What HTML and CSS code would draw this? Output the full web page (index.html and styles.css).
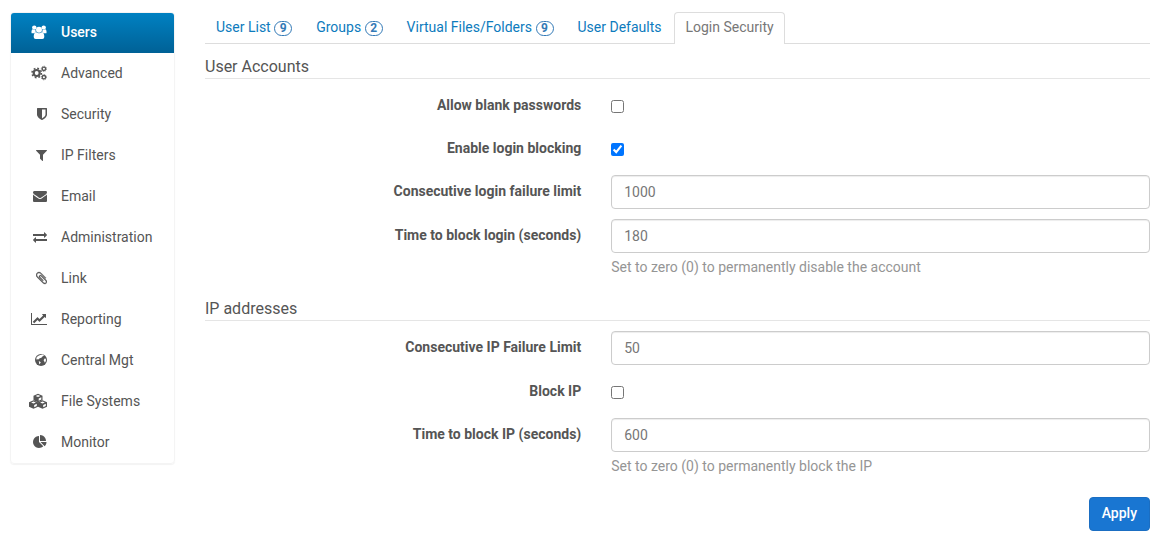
FILE: index.html
```
<!DOCTYPE html>
<html lang="en">
<head>
    <meta charset="UTF-8">
    <meta name="viewport" content="width=device-width, initial-scale=1.0">
    <title>Login Security</title>
    <link rel="stylesheet" href="styles.css">
</head>
<body>
    <nav class="sidebar">
        <a href="#" class="active">
            <span class="icon"><svg width="16" height="16" viewBox="0 0 16 16"><circle cx="3.3" cy="3.6" r="2.200"/><circle cx="12.7" cy="3.6" r="2.200"/><path d="M.5 9V7.2Q.7 5.3 1.8 5.3q1.5 1 2.7.4Q4.300 7.500 5 8.400 3.700 8.500 3 9.300H1.200Q.5 9.300.5 9zM15.500 9V7.200q-.2-1.900-1.300-1.900-1.500 1-2.700.4.2 1.800-.5 2.700 1.300.1 2 .9h1.800q.7 0 .7-.3z"/><circle cx="8" cy="5.700" r="3"/><path d="M2.700 13q0-4.500 2.500-4.700Q8 10.300 10.800 8.300q2.500.2 2.500 4.700 0 2-2 2H4.700q-2 0-2-2z"/></svg></span>
            Users
        </a>
        <a href="#">
            <span class="icon"><svg width="16" height="16" viewBox="0 0 16 16"><g fill="none" stroke="currentColor"><circle cx="5.700" cy="8" r="3" stroke-width="2.200"/><circle cx="5.700" cy="8" r="4.700" stroke-width="1.500" stroke-dasharray="1.800 1.890"/><circle cx="12.900" cy="3.800" r="1.700" stroke-width="1.300"/><circle cx="12.900" cy="3.800" r="2.600" stroke-width=".8" stroke-dasharray="1.100 .94"/><circle cx="12.900" cy="12.200" r="1.700" stroke-width="1.300"/><circle cx="12.900" cy="12.200" r="2.600" stroke-width=".8" stroke-dasharray="1.100 .94"/></g></svg></span>
            Advanced
        </a>
        <a href="#">
            <span class="icon"><svg width="10" height="14" viewBox="256 0 1280 1792"><path d="M1344 960v-640h-448v1137q119-63 213-137 235-184 235-360zm192-768v768q0 86-33.500 170.500t-83 150-118 127.500-126.500 103-121 77.500-89.500 49.500-42.500 20q-12 6-26 6t-26-6q-16-7-42.500-20t-89.500-49.500-121-77.500-126.500-103-118-127.500-83-150-33.500-170.500v-768q0-26 19-45t45-19h1152q26 0 45 19t19 45z"/></svg></span>
            Security
        </a>
        <a href="#">
            <span class="icon"><svg width="11" height="14" viewBox="192 0 1408 1792"><path d="M1595 295q17 41-14 70l-493 493v742q0 42-39 59-13 5-25 5-27 0-45-19l-256-256q-19-19-19-45v-486l-493-493q-31-29-14-70 17-39 59-39h1280q42 0 59 39z"/></svg></span>
            IP Filters
        </a>
        <a href="#">
            <span class="icon"><svg width="14" height="14" viewBox="0 0 1792 1792"><path d="M1792 710v794q0 66-47 113t-113 47h-1472q-66 0-113-47t-47-113v-794q44 49 101 87 362 246 497 345 57 42 92.500 65.500t94.500 48 110 24.500h2q51 0 110-24.500t94.500-48 92.500-65.500q170-123 498-345 57-39 100-87zm0-294q0 79-49 151t-122 123q-376 261-468 325-10 7-42.500 31t-54 38.500-52 32.500-57.500 27-50 9h-2q-23 0-50-9t-57.500-27-52-32.500-54-38.500-42.500-31q-91-64-262-182.500t-205-142.500q-62-42-117-115.500t-55-136.500q0-78 41.500-130t118.500-52h1472q65 0 112.500 47t47.500 113z"/></svg></span>
            Email
        </a>
        <a href="#">
            <span class="icon"><svg width="14" height="14" viewBox="0 0 1792 1792"><path d="M1792 1184v192q0 13-9.500 22.500t-22.500 9.500h-1376v192q0 13-9.500 22.500t-22.500 9.500q-12 0-24-10l-319-320q-9-9-9-22 0-14 9-23l320-320q9-9 23-9 13 0 22.500 9.500t9.500 22.500v192h1376q13 0 22.500 9.500t9.500 22.500zm0-544q0 14-9 23l-320 320q-9 9-23 9-13 0-22.500-9.500t-9.500-22.500v-192h-1376q-13 0-22.500-9.500t-9.500-22.500v-192q0-13 9.500-22.500t22.500-9.500h1376v-192q0-14 9-23t23-9q12 0 24 10l319 319q9 9 9 23z"/></svg></span>
            Administration
        </a>
        <a href="#">
            <span class="icon"><svg width="11" height="14" viewBox="192 0 1408 1792"><path stroke="currentColor" stroke-width="40" d="M1596 1385q0 117-79 196t-196 79q-135 0-235-100l-777-776q-113-115-113-271 0-159 110-270t269-111q158 0 273 113l605 606q10 10 10 22 0 16-30.500 46.500t-46.500 30.500q-13 0-23-10l-606-607q-79-77-181-77-106 0-179 75t-73 181q0 105 76 181l776 777q63 63 145 63 64 0 106-42t42-106q0-82-63-145l-581-581q-26-24-60-24-29 0-48 19t-19 48q0 32 25 59l410 410q10 10 10 22 0 16-31 47t-47 31q-12 0-22-10l-410-410q-63-61-63-149 0-82 57-139t139-57q88 0 149 63l581 581q100 98 100 235z"/></svg></span>
            Link
        </a>
        <a href="#">
            <span class="icon"><svg width="16" height="14" viewBox="0 0 2048 1792"><path d="M2048 1536v128h-2048v-1536h128v1408h1920zm-128-1248v435q0 21-19.500 29.500t-35.500-7.500l-121-121-633 633q-10 10-23 10t-23-10l-233-233-416 416-192-192 585-585q10-10 23-10t23 10l233 233 464-464-121-121q-16-16-7.500-35.500t29.500-19.500h435q14 0 23 9t9 23z"/></svg></span>
            Reporting
        </a>
        <a href="#">
            <span class="icon"><svg width="12" height="14" viewBox="0 0 12 14"><circle cx="6" cy="7" r="6"/><path class="cut" d="M5.200 2 7.600 1.600 9 2.300 8 3.200 7 3.700 6.500 4.800 5.500 5.100 4.300 5.600 3.300 6.600 2.300 6.300 1.300 6.600 1.500 4.600 3 3zM9.600 5.500 10.900 5.700 10.900 8 9.900 9.800 9.300 8.500 8.600 7.300zM3.800 8 5.800 9.200 4.800 11 4.300 11.300z"/></svg></span>
            Central Mgt
        </a>
        <a href="#">
            <span class="icon"><svg width="18" height="16" viewBox="0 0 18 16"><defs><g id="cube"><path d="M4.500-.2 9 1.700V6.300L4.500 8.300 0 6.300V1.700z"/><path class="cut" d="M4.500.9 6.900 1.900 4.500 2.900 2.100 1.900zM5.200 4.500 7.800 3.300v2.300L5.200 6.800z"/></g></defs><use href="#cube" x="4.500" y="1"/><use href="#cube" x="0" y="7.500"/><use href="#cube" x="9" y="7.500"/></svg></span>
            File Systems
        </a>
        <a href="#">
            <span class="icon"><svg width="14" height="14" viewBox="0 0 1792 1792"><path d="M768 890l546 546q-106 108-247.500 168t-298.500 60q-209 0-385.500-103t-279.500-279.500-103-385.500 103-385.500 279.500-279.500 385.500-103v762zm187 6h773q0 157-60 298.500t-168 247.500zm709-128h-768v-768q209 0 385.500 103t279.500 279.500 103 385.500z"/></svg></span>
            Monitor
        </a>
    </nav>

    <main>
        <ul class="tabs">
            <li><a href="#">User List <span class="badge">9</span></a></li>
            <li><a href="#">Groups <span class="badge">2</span></a></li>
            <li><a href="#">Virtual Files/Folders <span class="badge">9</span></a></li>
            <li><a href="#">User Defaults</a></li>
            <li><a href="#" class="active">Login Security</a></li>
        </ul>

        <form>
            <h2>User Accounts</h2>
            <div class="form-group">
                <label for="allowBlank">Allow blank passwords</label>
                <div class="check"><input type="checkbox" id="allowBlank"></div>
            </div>
            <div class="form-group">
                <label for="loginBlocking">Enable login blocking</label>
                <div class="check"><input type="checkbox" id="loginBlocking" checked></div>
            </div>
            <div class="form-group">
                <label for="loginLimit">Consecutive login failure limit</label>
                <div><input type="text" id="loginLimit" value="1000"></div>
            </div>
            <div class="form-group">
                <label for="loginTime">Time to block login (seconds)</label>
                <div>
                    <input type="text" id="loginTime" value="180">
                    <p class="help">Set to zero (0) to permanently disable the account</p>
                </div>
            </div>

            <h2>IP addresses</h2>
            <div class="form-group">
                <label for="ipLimit">Consecutive IP Failure Limit</label>
                <div><input type="text" id="ipLimit" value="50"></div>
            </div>
            <div class="form-group">
                <label for="blockIp">Block IP</label>
                <div class="check"><input type="checkbox" id="blockIp"></div>
            </div>
            <div class="form-group">
                <label for="ipTime">Time to block IP (seconds)</label>
                <div>
                    <input type="text" id="ipTime" value="600">
                    <p class="help">Set to zero (0) to permanently block the IP</p>
                </div>
            </div>

            <div class="actions">
                <button type="button">Apply</button>
            </div>
        </form>
    </main>
</body>
</html>
```
FILE: styles.css
```
* {
    box-sizing: border-box;
    margin: 0;
    padding: 0;
}

body {
    display: flex;
    align-items: flex-start;
    gap: 30px;
    padding: 12px 16px 10px 10px;
    font-family: Roboto, sans-serif;
    font-size: 14px;
    line-height: 20px;
    color: #555;
    background-color: #fff;
}

a {
    color: #0d7bbd;
    text-decoration: none;
}

/* Sidebar */
.sidebar {
    flex: 0 0 165px;
    border: 1px solid #f4f4f4;
    border-radius: 4px;
    box-shadow: 0 1px 1px rgba(0, 0, 0, 0.05);
}

.sidebar a {
    display: flex;
    align-items: center;
    height: 40px;
    padding-bottom: 2px;
    margin-bottom: 1px;
    color: #555;
}

.sidebar a:last-child {
    margin-bottom: 0;
}

.sidebar a.active {
    color: #fff;
    font-weight: 500;
    background: linear-gradient(#0081c2, #006196);
    border-radius: 3px 3px 0 0;
}

.icon {
    display: flex;
    justify-content: flex-end;
    width: 36px;
    margin-right: 14px;
}

.icon svg {
    flex: none;
    fill: currentColor;
}

.icon .cut {
    fill: #fff;
}

/* Tabs */
.tabs {
    display: flex;
    gap: 2px;
    list-style: none;
    border-bottom: 1px solid #ddd;
}

.tabs li {
    margin-bottom: -1px;
}

.tabs a {
    display: block;
    padding: 4px 10px 7px;
    border: 1px solid transparent;
    border-bottom: 0;
    border-radius: 4px 4px 0 0;
}

.tabs a.active {
    color: #777;
    background-color: #fff;
    border-color: #ddd;
}

.badge {
    display: inline-block;
    min-width: 18px;
    padding: 0 4px;
    border: 1px solid #337ab7;
    border-radius: 8px;
    font-size: 12px;
    font-weight: 700;
    line-height: 13px;
    text-align: center;
    color: #337ab7;
}

/* Form */
main {
    flex: 1;
    min-width: 0;
}

h2 {
    padding: 13px 0 1px;
    margin-bottom: 10px;
    border-bottom: 1px solid #e5e5e5;
    font-size: 16px;
    font-weight: 400;
    line-height: 20px;
}

.form-group {
    display: grid;
    grid-template-columns: 5fr 7fr;
    margin: 0 -15px 10px;
}

.form-group > * {
    padding: 0 15px;
}

.form-group label {
    padding-top: 6px;
    font-weight: 700;
    text-align: right;
}

.form-group .check {
    height: 33px;
    padding-top: 11px;
}

input[type="checkbox"] {
    display: block;
    width: 13px;
    height: 13px;
}

input[type="text"] {
    display: block;
    width: 100%;
    height: 34px;
    padding: 6px 12px;
    border: 1px solid #ccc;
    border-radius: 4px;
    box-shadow: inset 0 1px 1px rgba(0, 0, 0, 0.075);
    font: inherit;
    color: #777;
}

.help {
    margin-top: 5px;
    line-height: 18px;
    color: #959595;
}

.actions {
    padding-top: 12px;
    text-align: right;
}

button {
    height: 34px;
    padding: 0 12px 2px;
    border: 1px solid #1b6ec2;
    border-radius: 4px;
    font: inherit;
    font-weight: 500;
    color: #fff;
    background-color: #1976d2;
    cursor: pointer;
}
```
